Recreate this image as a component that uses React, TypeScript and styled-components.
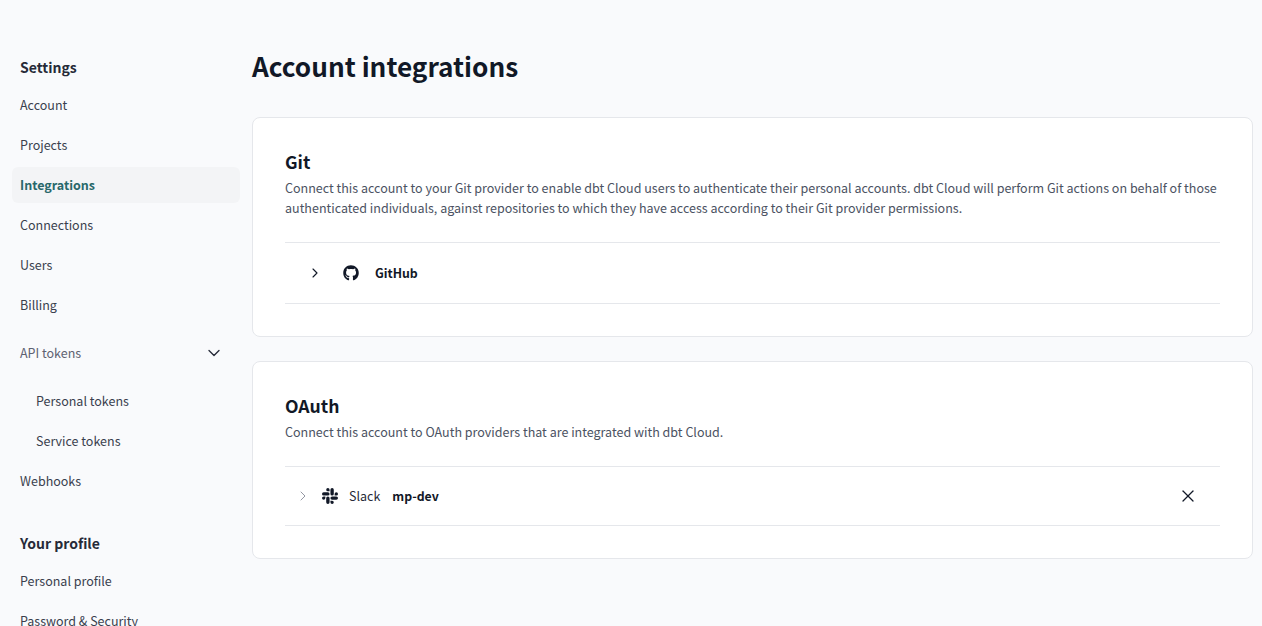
import React from "react";
import styled, { createGlobalStyle } from "styled-components";
import { ChevronDown, ChevronRight, X } from "lucide-react";
import { FaGithub } from "react-icons/fa";
import { SiSlack } from "react-icons/si";

const Global = createGlobalStyle`
  html, body { margin: 0; height: 100%; overflow: hidden; background: #f9fafc; }
  body { font-family: "Noto Sans CJK SC", "Noto Sans", sans-serif; color: #262a38; }
  * { box-sizing: border-box; }
`;

const Page = styled.div`
  display: flex;
  height: 626px;
  overflow: hidden;
  background: #f9fafc;
`;

const Sidebar = styled.nav`
  width: 252px;
  flex: none;
  padding: 50px 12px 0;
  display: flex;
  flex-direction: column;
`;

const SectionTitle = styled.h3<{ $top?: number }>`
  margin: ${(p) => p.$top ?? 0}px 8px 1px;
  height: 34px;
  flex: none;
  display: flex;
  align-items: center;
  font-size: 14px;
  line-height: 24px;
  font-weight: 600;
  color: #262a38;
`;

const NavItem = styled.a<{ $active?: boolean; $nested?: boolean; $muted?: boolean }>`
  display: flex;
  flex: none;
  align-items: center;
  justify-content: space-between;
  height: 36px;
  margin: 2px 0;
  padding: 0 16px 0 ${(p) => (p.$nested ? 24 : 8)}px;
  border-radius: 6px;
  font-size: 12.5px;
  line-height: 20px;
  font-weight: ${(p) => (p.$active ? 600 : 400)};
  color: ${(p) => (p.$active ? "#28686b" : p.$muted ? "#5e6272" : "#3a3f4e")};
  background: ${(p) => (p.$active ? "#f3f4f6" : "transparent")};
`;

const Group = styled.div`
  margin: 8px 0;
  display: flex;
  flex: none;
  flex-direction: column;
`;

const Main = styled.main`
  flex: 1;
  padding: 47px 9px 0 0;
  display: flex;
  flex-direction: column;
  min-width: 0;
`;

const Title = styled.h1`
  margin: 0 0 32px;
  font-size: 26.2px;
  line-height: 38px;
  font-weight: 600;
  color: #111827;
`;

const Card = styled.section`
  background: #fff;
  border: 1px solid #e5e7eb;
  border-radius: 8px;
  padding: 31px 32px 32px;
  margin-bottom: 24px;
`;

const CardTitle = styled.h2`
  margin: 0;
  font-size: 17.6px;
  line-height: 26px;
  font-weight: 600;
  color: #111827;
`;

const Description = styled.p`
  margin: 3px 0 24px;
  font-size: 12.53px;
  line-height: 20px;
  color: #4b5262;
`;

const Row = styled.div<{ $height: number; $pad: number }>`
  display: flex;
  align-items: center;
  height: ${(p) => p.$height}px;
  padding: 0 22px 0 ${(p) => p.$pad}px;
  border-top: 1px solid #e5e7eb;
  border-bottom: 1px solid #e5e7eb;
`;

const Chevron = styled(ChevronRight)<{ $muted?: boolean }>`
  flex: none;
  color: ${(p) => (p.$muted ? "#8c909c" : "#111827")};
`;

const GithubIcon = styled(FaGithub)`
  flex: none;
  margin: 0 16px 0 20px;
  color: #111827;
`;

const SlackIcon = styled(SiSlack)`
  flex: none;
  margin: 0 11px;
  color: #111827;
`;

const Strong = styled.span`
  font-size: 12.3px;
  line-height: 20px;
  font-weight: 600;
  color: #111827;
`;

const Plain = styled.span`
  font-size: 12.5px;
  line-height: 20px;
  color: #262a38;
  margin-right: 12px;
`;

const Close = styled(X)`
  margin-left: auto;
  color: #111827;
`;

const Caret = styled(ChevronDown)`
  color: #262a38;
`;

export default function App() {
  return (
    <Page>
      <Global />
      <Sidebar>
        <SectionTitle>Settings</SectionTitle>
        <NavItem>Account</NavItem>
        <NavItem>Projects</NavItem>
        <NavItem $active>Integrations</NavItem>
        <NavItem>Connections</NavItem>
        <NavItem>Users</NavItem>
        <NavItem>Billing</NavItem>
        <Group>
          <NavItem $muted>
            API tokens
            <Caret size={20} strokeWidth={1.6} />
          </NavItem>
        </Group>
        <NavItem $nested>Personal tokens</NavItem>
        <NavItem $nested>Service tokens</NavItem>
        <NavItem>Webhooks</NavItem>
        <SectionTitle $top={25}>Your profile</SectionTitle>
        <NavItem>Personal profile</NavItem>
        <NavItem>Password &amp; Security</NavItem>
      </Sidebar>
      <Main>
        <Title>Account integrations</Title>
        <Card>
          <CardTitle>Git</CardTitle>
          <Description>
            Connect this account to your Git provider to enable dbt Cloud users to authenticate their personal accounts. dbt Cloud will perform Git actions on behalf of those authenticated individuals, against repositories to which they have access according to their Git provider permissions.
          </Description>
          <Row $height={62} $pad={22}>
            <Chevron size={16} strokeWidth={1.7} />
            <GithubIcon size={16} />
            <Strong>GitHub</Strong>
          </Row>
        </Card>
        <Card>
          <CardTitle>OAuth</CardTitle>
          <Description>Connect this account to OAuth providers that are integrated with dbt Cloud.</Description>
          <Row $height={60} $pad={10}>
            <Chevron size={16} strokeWidth={1.4} $muted />
            <SlackIcon size={16} />
            <Plain>Slack</Plain>
            <Strong>mp-dev</Strong>
            <Close size={20} strokeWidth={1.5} />
          </Row>
        </Card>
      </Main>
    </Page>
  );
}
